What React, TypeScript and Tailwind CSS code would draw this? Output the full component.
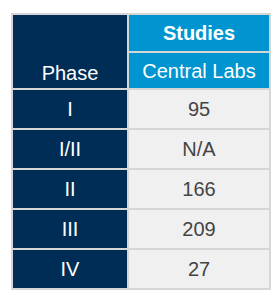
const rows = [
  { phase: 'I', value: '95' },
  { phase: 'I/II', value: 'N/A' },
  { phase: 'II', value: '166' },
  { phase: 'III', value: '209' },
  { phase: 'IV', value: '27' },
];

export default function App() {
  return (
    <div className="w-[277px] h-[298px] bg-white pt-[13px] pl-[11px] font-['Liberation_Sans',Arial,sans-serif]">
      <table className="border-collapse text-[20px] leading-none">
        <thead>
          <tr>
            <th
              rowSpan={2}
              className="w-[116px] bg-[#002d56] text-white font-normal align-bottom pb-[5px] border-2 border-[#d6d6d6]"
            >
              Phase
            </th>
            <th className="w-[142px] h-[38px] bg-[#0095d0] text-white font-bold border-2 border-[#d6d6d6]">
              Studies
            </th>
          </tr>
          <tr>
            <th className="h-[37px] bg-[#0095d0] text-white font-normal border-2 border-[#d6d6d6]">
              Central Labs
            </th>
          </tr>
        </thead>
        <tbody>
          {rows.map((r) => (
            <tr key={r.phase}>
              <td className="h-[40px] bg-[#002d56] text-white text-center border-2 border-[#d6d6d6]">
                {r.phase}
              </td>
              <td className="h-[40px] bg-[#f0f0f0] text-[#444] text-center border-2 border-[#d6d6d6]">
                {r.value}
              </td>
            </tr>
          ))}
        </tbody>
      </table>
    </div>
  );
}
